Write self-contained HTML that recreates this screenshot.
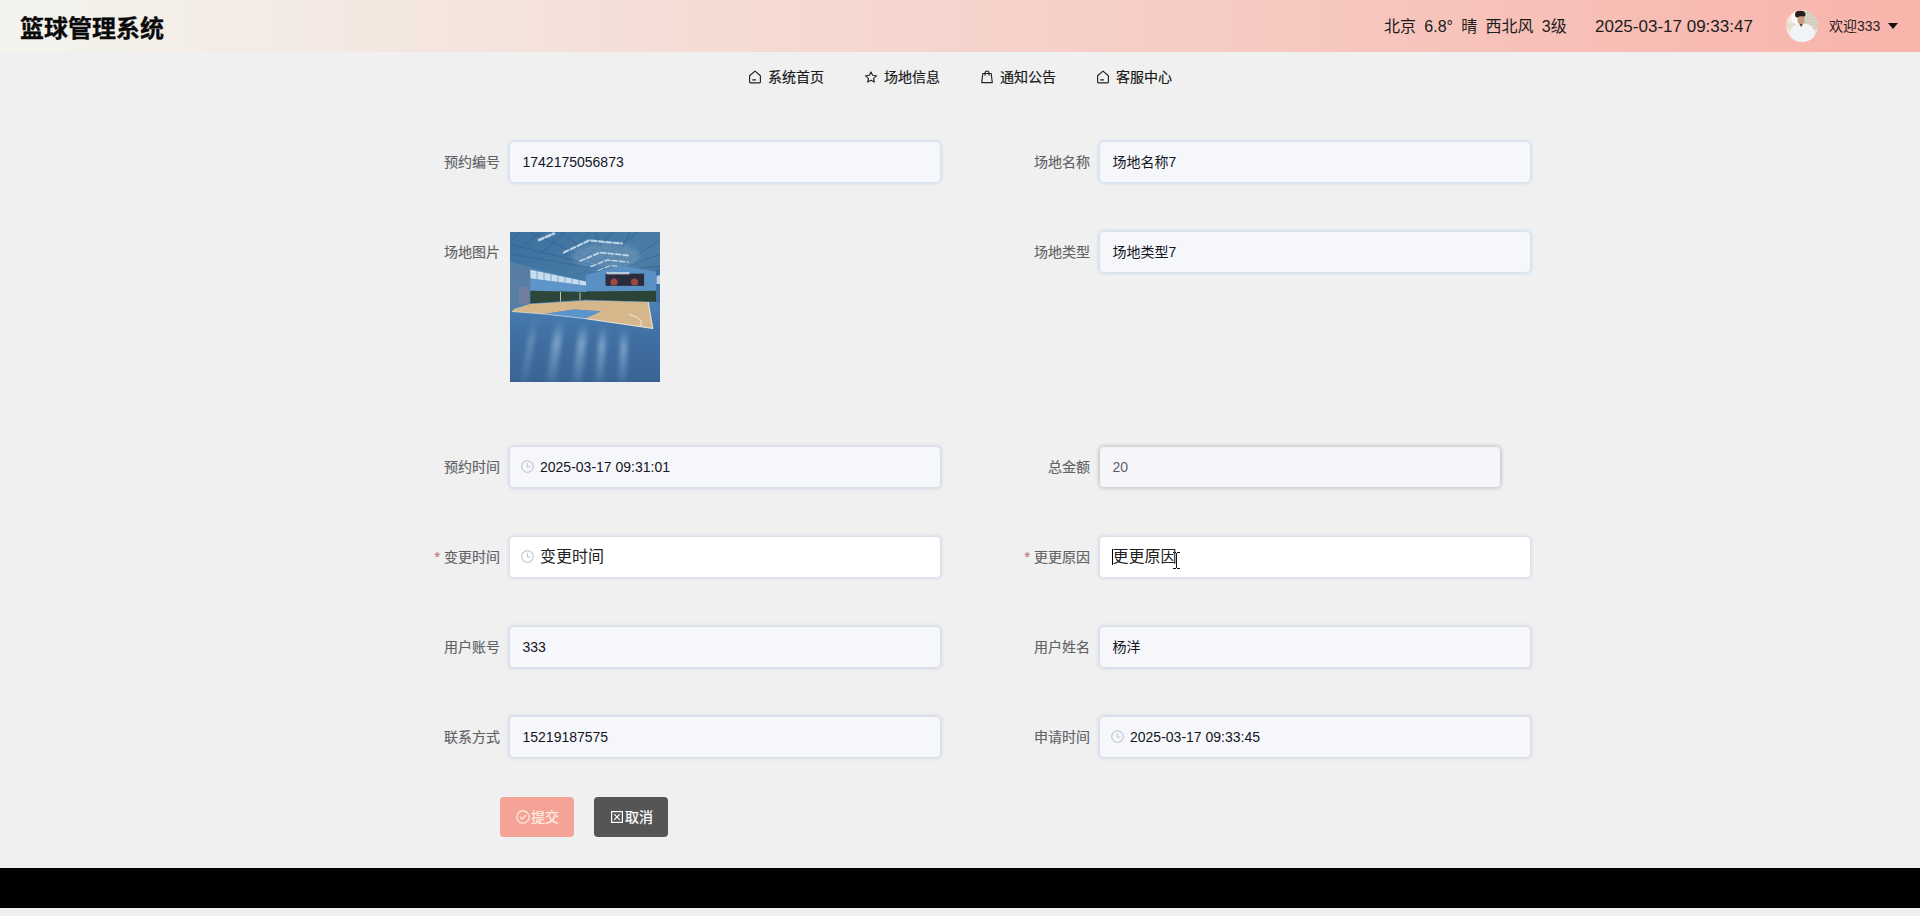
<!DOCTYPE html>
<html lang="zh-CN">
<head>
<meta charset="utf-8">
<title>篮球管理系统</title>
<style>
*{box-sizing:border-box;margin:0;padding:0}
html,body{width:1920px;height:916px;overflow:hidden}
body{position:relative;background:#f0f0f0;font-family:"Liberation Sans","Noto Sans CJK SC",sans-serif;font-size:14px;color:#333}
.abs{position:absolute;white-space:nowrap}
/* header */
#hdr{left:0;top:0;width:1920px;height:52px;background:linear-gradient(90deg,#f3f4ee 0%,#f8b4ab 100%)}
#title{left:20px;top:11px;height:36px;line-height:36px;font-size:24px;font-weight:bold;color:#0a0a0a;-webkit-text-stroke:.3px #0a0a0a}
.htxt{top:14px;height:26px;line-height:26px;font-size:16px;color:#1c1c1c}
#weather{word-spacing:-0.3px}
#avatar{left:1786px;top:10px;width:32px;height:32px;border-radius:50%;overflow:hidden}
#welcome{left:1829px;top:13px;height:26px;line-height:26px;font-size:14px;color:#2a1e22}
#caret{left:1888px;top:23px;width:0;height:0;border-left:5px solid transparent;border-right:5px solid transparent;border-top:6px solid #1a0d0d}
/* nav */
.nav{top:66px;height:22px;line-height:22px;font-size:14px;color:#1a1a1a;-webkit-text-stroke:.2px #1a1a1a}
.nav svg{position:absolute;left:-20px;top:4px;width:14px;height:14px}
/* form */
.lbl{width:120px;height:40px;line-height:40px;text-align:right;font-size:14px;color:#606266;-webkit-text-stroke:.15px #606266}
.lbl i{font-style:normal;color:#e8808a;margin-right:4px}
.inp{width:430px;height:40px;line-height:40px;border-radius:4px;background:#f6f7fb;box-shadow:0 0 3px 2px rgba(90,160,245,.19);padding-left:12.5px;font-size:14px;color:#14141e}
.inp.w{background:#fff}
.inp.l{box-shadow:0 0 3px 2px rgba(135,148,208,.24)}
.inp.w.l{box-shadow:0 0 3px 2px rgba(140,150,215,.2)}
.inp.t{padding-left:30px}
.inp .ph{font-size:16px;color:#222}
.inp svg{position:absolute;left:11.3px;top:13.4px;width:13px;height:13px}
#total{background:#f6f6fa;color:#5a5e6b;box-shadow:0 0 4px 1px rgba(0,0,0,.22)}
#tcaret{left:1112px;top:549px;width:1px;height:16px;background:#000}
#ibeam{left:1173px;top:552px;width:8px;height:17px}
.btn{top:797px;width:74px;height:40px;line-height:41px;border-radius:4px;font-size:14px;color:#fff;text-align:center;-webkit-text-stroke:.25px currentColor}
#foot{left:0;top:868px;width:1920px;height:40px;background:#000}
</style>
</head>
<body>
<div id="hdr" class="abs"></div>
<div id="title" class="abs">篮球管理系统</div>
<div id="weather" class="abs htxt" style="left:1384px">北京&nbsp; 6.8°&nbsp; 晴&nbsp; 西北风&nbsp; 3级</div>
<div id="clock" class="abs htxt" style="left:1595px;font-size:17px">2025-03-17 09:33:47</div>
<div id="avatar" class="abs"><svg viewBox="0 0 32 32" width="32" height="32" style="display:block">
<defs><filter id="ab" x="-20%" y="-20%" width="140%" height="140%"><feGaussianBlur stdDeviation="0.6"/></filter></defs>
<rect width="32" height="32" fill="#f3e6de"/>
<rect x="17" y="0" width="15" height="20" fill="#d9d2c4"/>
<g stroke="#cfc6b6" stroke-width=".8"><path d="M17 3 H32 M17 6 H32 M17 9 H32 M17 12 H32 M17 15 H32 M17 18 H32"/></g>
<rect x="0" y="13" width="12" height="6" fill="#e4dcc6" opacity=".8"/>
<g filter="url(#ab)">
<path d="M5 4 L9 2 L14 12 L11 15 L6 12 Z" fill="#fbf8f7"/>
<path d="M4 32 L5 19 Q8 14 14 14 L21 14 Q27 15 28 22 L28 32 Z" fill="#f1f4f6"/>
<ellipse cx="15" cy="10" rx="3.6" ry="4.2" fill="#c99a82"/>
<path d="M9 5 Q9 0.5 14 0.8 Q19.5 0.5 19.5 5 Q19 7 17 6.5 Q14 5.5 11.5 7.5 Q9.5 8 9 5 Z" fill="#2b1f1a"/>
<path d="M13.5 14 L15 17 L17 14 Z" fill="#5a4038"/>
</g>
</svg></div>
<div id="welcome" class="abs">欢迎333</div>
<div id="caret" class="abs"></div>

<div class="abs nav" style="left:768px"><svg viewBox="0 0 14 14" fill="none" stroke="#222" stroke-width="1.15" stroke-linejoin="round" stroke-linecap="round"><path d="M1.6 5.7 L7 1.1 L12.4 5.7 V12 Q12.4 12.8 11.6 12.8 H2.4 Q1.6 12.8 1.6 12 Z"/><path d="M4.7 9.9 H7.5"/></svg>系统首页</div>
<div class="abs nav" style="left:884px"><svg viewBox="0 0 14 14" fill="none" stroke="#222" stroke-width="1.15" stroke-linejoin="round"><path d="M7 1.9 L8.6 5.3 L12.4 5.8 L9.6 8.4 L10.3 12.1 L7 10.3 L3.7 12.1 L4.4 8.4 L1.6 5.8 L5.4 5.3 Z"/></svg>场地信息</div>
<div class="abs nav" style="left:1000px"><svg viewBox="0 0 14 14" fill="none" stroke="#222" stroke-width="1.15" stroke-linejoin="round" stroke-linecap="round"><path d="M2.8 3.5 H11.2 L12.3 12.6 H1.7 Z"/><path d="M5 5.2 V3.1 Q5 1 7 1 Q9 1 9 3.1 V5.2"/></svg>通知公告</div>
<div class="abs nav" style="left:1116px"><svg viewBox="0 0 14 14" fill="none" stroke="#222" stroke-width="1.15" stroke-linejoin="round" stroke-linecap="round"><path d="M1.6 5.7 L7 1.1 L12.4 5.7 V12 Q12.4 12.8 11.6 12.8 H2.4 Q1.6 12.8 1.6 12 Z"/><path d="M4.7 9.9 H7.5"/></svg>客服中心</div>

<div class="abs lbl" style="left:380px;top:142px">预约编号</div>
<div class="abs inp" style="left:510px;top:142px">1742175056873</div>
<div class="abs lbl" style="left:970px;top:142px">场地名称</div>
<div class="abs inp" style="left:1100px;top:142px">场地名称7</div>

<div class="abs lbl" style="left:380px;top:232px">场地图片</div>
<div id="pic" class="abs" style="left:510px;top:232px;width:150px;height:150px;background:#3f6ea3;overflow:hidden"><svg viewBox="0 0 150 150" width="150" height="150" style="display:block">
<defs>
<linearGradient id="ceil" x1="0" y1="0" x2="1" y2="1"><stop offset="0" stop-color="#3d729f"/><stop offset=".55" stop-color="#4a7ca6"/><stop offset="1" stop-color="#3b6a94"/></linearGradient>
<linearGradient id="flr" x1="0" y1="0" x2="0" y2="1"><stop offset="0" stop-color="#4d82b8"/><stop offset=".35" stop-color="#4272a6"/><stop offset="1" stop-color="#3a6393"/></linearGradient>
<linearGradient id="refl" x1="0" y1="0" x2="0" y2="1"><stop offset="0" stop-color="#9fc4e6" stop-opacity="0"/><stop offset=".35" stop-color="#a9cbe9" stop-opacity=".55"/><stop offset="1" stop-color="#8fb6dc" stop-opacity=".15"/></linearGradient>
<filter id="bl" x="-10%" y="-10%" width="120%" height="120%"><feGaussianBlur stdDeviation="0.7"/></filter>
<filter id="bl2" x="-30%" y="-10%" width="160%" height="120%"><feGaussianBlur stdDeviation="2"/></filter>
</defs>
<rect width="150" height="150" fill="url(#ceil)"/>
<!-- roof truss lines -->
<g stroke="#2f5f8b" stroke-width=".8" opacity=".8">
<path d="M0 12 L94 36 M0 22 L94 38 M20 0 L94 34 M50 0 L96 33 M85 0 L99 32 M120 0 L104 32 M150 8 L110 34 M150 22 L114 36 M150 34 L118 38"/>
<path d="M10 0 L0 10 M30 0 L8 18 M55 0 L30 22 M80 0 L52 26 M104 0 L70 30 M128 0 L84 33"/>
</g>
<ellipse cx="96" cy="24" rx="34" ry="13" fill="#8fb0cc" opacity=".35" filter="url(#bl2)"/>
<!-- skylights -->
<g stroke="#cfe2f1" stroke-linecap="round" fill="none" filter="url(#bl)" opacity=".85" stroke-dasharray="5 2.5">
<path d="M29 8 L44 1.5" stroke-width="2.6"/>
<path d="M54 20.5 L79 8.5 L112 11.5" stroke-width="2.2"/>
<path d="M70 29 L90 20.5 L118 23.5" stroke-width="1.8"/>
<path d="M81 34.5 L97 28 L118 30" stroke-width="1.5"/>
<path d="M88 38.5 L101 33.5 L112 34.5" stroke-width="1.2"/>
</g>
<!-- left wall -->
<path d="M0 30 L77 50 L77 72 L0 76 Z" fill="#4f82b2"/>
<path d="M0 30 L20 35.5 L20 73 L0 76 Z" fill="#587ea3"/>
<rect x="9" y="55" width="10" height="17" fill="#7d7f9a" opacity=".7"/>
<path d="M20.4 37.7 L76 49.5 L76 53.8 L20.4 46.4 Z" fill="#c9ddf1"/>
<g stroke="#5b8bb8" stroke-width=".7"><path d="M27 39 V47.5 M34 40.5 V48.5 M41 42 V49.5 M48 43.5 V50.3 M55 45 V51.2 M62 46.5 V52 M69 48 V53"/></g>
<path d="M20.4 46.4 L76 53.8 L76 60 L20.4 58.8 Z" fill="#5f96ca"/>
<path d="M20.4 58.8 L76 60 L76 67.7 L20.4 71.4 Z" fill="#2c4639"/>
<g stroke="#c9c3a8" stroke-width="1"><path d="M50.5 60 V70 M70 60.5 V68.5"/></g>
<!-- back wall -->
<path d="M76 43 L112 33.5 L147 40 L148 59 L76 59.5 Z" fill="#5a90c3"/>
<path d="M76 59.5 L148 58.8 L148 70 L76 68 Z" fill="#2b4437"/>
<rect x="95.5" y="41.7" width="38.6" height="12.1" fill="#2a2b3d"/>
<rect x="96.5" y="40" width="23" height="2.4" fill="#cfdde9" opacity=".8"/>
<circle cx="104" cy="50" r="3.6" fill="#a0463f" filter="url(#bl)"/>
<circle cx="124.5" cy="50" r="3.6" fill="#a0463f" filter="url(#bl)"/>
<path d="M146 38 L150 36 L150 72 L146 70 Z" fill="#3f6f9c"/>
<path d="M146.5 44 L150 43 L150 52 L146.5 52 Z" fill="#b5d0ea"/>
<!-- floor -->
<path d="M0 77 L20 71.4 L76 67.7 L148 70 L150 72 L150 150 L0 150 Z" fill="url(#flr)"/>
<!-- tan court -->
<path d="M3.7 77 L20 72 L76 68.5 L138.2 70 L142.9 96.5 L75.1 86.6 L90.9 79.2 L64 77.4 L34.3 82 L1.9 79.5 Z" fill="#d6b78b"/>
<path d="M34.3 82 L64 77.4 L90.9 79.2 L75.1 86.6 Z" fill="#5c94cc"/>
<g stroke="#f4f1e6" stroke-width=".9" fill="none"><path d="M138.2 70 L142.9 96.5 L75.1 86.6"/><path d="M119 82.2 Q132 86 131.5 91.5 L130.8 94.6"/><path d="M1.9 79.5 L34.3 82 L75.1 86.6" stroke-width=".6"/></g>
<!-- reflections -->
<g filter="url(#bl2)">
<path d="M46 88 L54 88 L46 150 L36 150 Z" fill="url(#refl)"/>
<path d="M70 90 L78 91 L72 150 L62 150 Z" fill="url(#refl)"/>
<path d="M90 93 L97 94 L93 150 L85 150 Z" fill="url(#refl)"/>
<path d="M111 96 L118 97 L116 150 L108 150 Z" fill="url(#refl)"/>
<path d="M22 86 L28 86 L18 150 L10 150 Z" fill="url(#refl)" opacity=".6"/>
</g>
</svg></div>
<div class="abs lbl" style="left:970px;top:232px">场地类型</div>
<div class="abs inp" style="left:1100px;top:232px">场地类型7</div>

<div class="abs lbl" style="left:380px;top:447px">预约时间</div>
<div class="abs inp t l" style="left:510px;top:447px"><svg viewBox="0 0 13 13" fill="none" stroke="#c0c4cc" stroke-width="1.1" stroke-linecap="round"><circle cx="6.5" cy="6.5" r="5.8"/><path d="M6.3 3.4 V7 H9"/></svg>2025-03-17 09:31:01</div>
<div class="abs lbl" style="left:970px;top:447px">总金额</div>
<div class="abs inp" id="total" style="left:1100px;top:447px;width:400px">20</div>

<div class="abs lbl" style="left:380px;top:537px"><i>*</i>变更时间</div>
<div class="abs inp w t l" style="left:510px;top:537px"><svg viewBox="0 0 13 13" fill="none" stroke="#c0c4cc" stroke-width="1.1" stroke-linecap="round"><circle cx="6.5" cy="6.5" r="5.8"/><path d="M6.3 3.4 V7 H9"/></svg><span class="ph">变更时间</span></div>
<div class="abs lbl" style="left:970px;top:537px"><i>*</i>更更原因</div>
<div class="abs inp w l" style="left:1100px;top:537px"><span class="ph">更更原因</span></div>

<div class="abs lbl" style="left:380px;top:627px">用户账号</div>
<div class="abs inp l" style="left:510px;top:627px">333</div>
<div class="abs lbl" style="left:970px;top:627px">用户姓名</div>
<div class="abs inp l" style="left:1100px;top:627px">杨洋</div>

<div class="abs lbl" style="left:380px;top:717px">联系方式</div>
<div class="abs inp l" style="left:510px;top:717px">15219187575</div>
<div class="abs lbl" style="left:970px;top:717px">申请时间</div>
<div class="abs inp t l" style="left:1100px;top:717px"><svg viewBox="0 0 13 13" fill="none" stroke="#c0c4cc" stroke-width="1.1" stroke-linecap="round"><circle cx="6.5" cy="6.5" r="5.8"/><path d="M6.3 3.4 V7 H9"/></svg>2025-03-17 09:33:45</div>

<div class="abs btn" style="left:500px;background:#f5a396;color:#fdeee0"><svg style="position:absolute;left:16px;top:13px;width:14px;height:14px" viewBox="0 0 14 14" fill="none" stroke="#fdeee0" stroke-width="1.2" stroke-linecap="round" stroke-linejoin="round"><circle cx="7" cy="7" r="6.2"/><path d="M4.2 7.2 L6.3 9.2 L10 5.2"/></svg><span style="position:absolute;left:31px;top:0">提交</span></div>
<div class="abs btn" style="left:594px;background:#555"><svg style="position:absolute;left:17px;top:14px;width:12px;height:12px" viewBox="0 0 12 12" fill="none" stroke="#fff" stroke-width="1.2"><rect x="0.6" y="0.6" width="10.8" height="10.8"/><path d="M3.2 3.2 L8.8 8.8 M8.8 3.2 L3.2 8.8"/></svg><span style="position:absolute;left:31px;top:0">取消</span></div>

<div id="tcaret" class="abs"></div>
<svg id="ibeam" class="abs" viewBox="0 0 8 17"><path d="M0 0.5 H3 M4 0.5 H7 M0 16.5 H3 M4 16.5 H7 M3.5 1 V16" stroke="#111" stroke-width="1" fill="none" shape-rendering="crispEdges"/></svg>
<div id="foot" class="abs"></div>
</body>
</html>
